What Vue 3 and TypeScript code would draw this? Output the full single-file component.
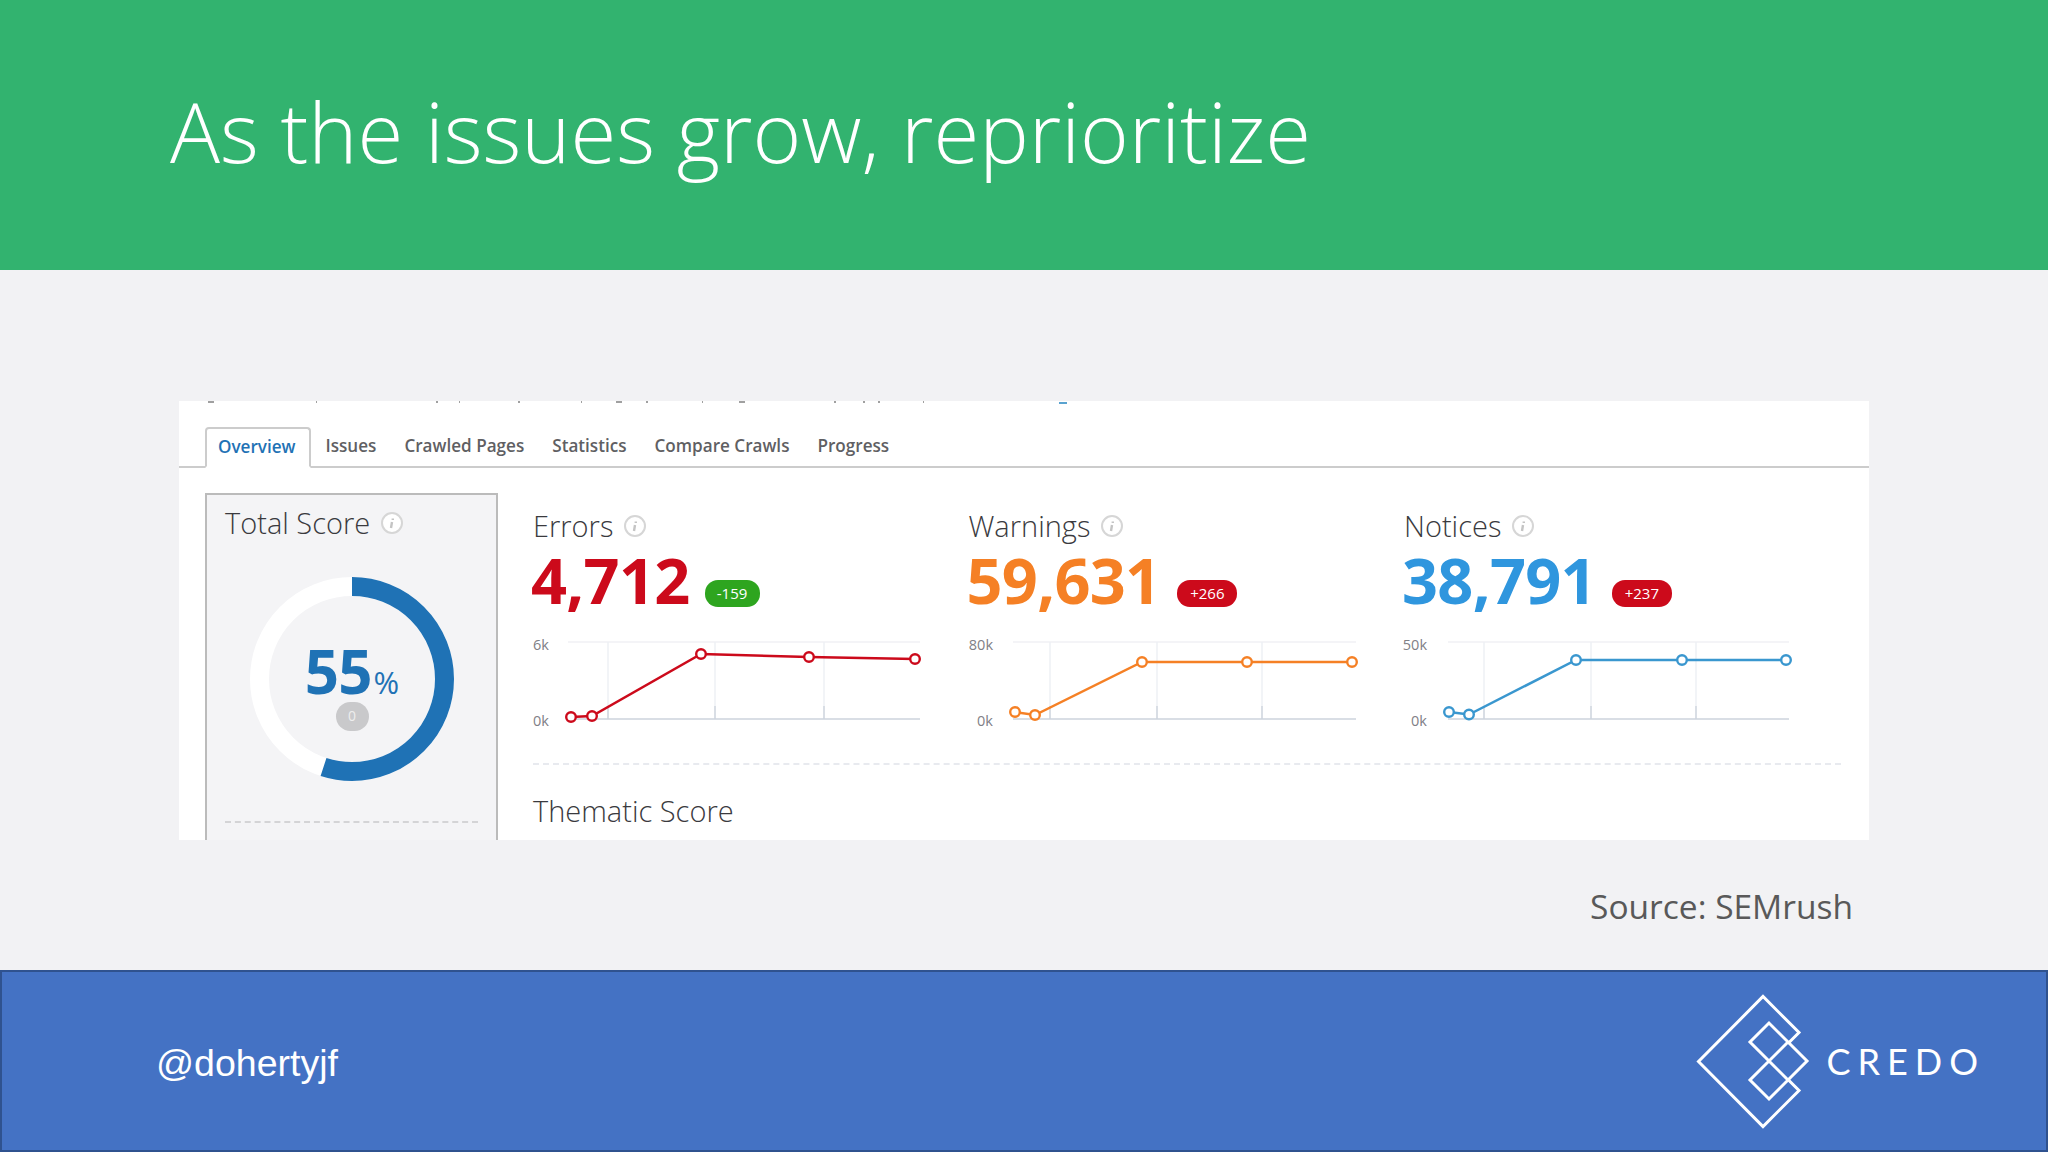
<script setup lang="ts">
interface Metric {
  title: string;
  value: string;
  color: string;
  lineColor: string;
  delta: string;
  deltaColor: string;
  deltaGap: number;
  deltaWidth: number;
  top: string;
  labelX: number;
  gridStart: number;
  gridEnd: number;
  ticks: number[];
  points: number[][];
}

const tabs = ['Issues', 'Crawled Pages', 'Statistics', 'Compare Crawls', 'Progress'];

// chart coordinates are relative to the column, y 0 sits above the top grid line
const metrics: Metric[] = [
  {
    title: 'Errors',
    value: '4,712',
    color: '#cc0a1b',
    lineColor: '#cc0a1b',
    delta: '-159',
    deltaColor: '#2ea51f',
    deltaGap: 15,
    deltaWidth: 55,
    top: '6k',
    labelX: 15,
    gridStart: 34,
    gridEnd: 386,
    ticks: [74, 181, 290],
    points: [[37, 87], [58, 86], [167, 24], [275, 27], [381, 29]],
  },
  {
    title: 'Warnings',
    value: '59,631',
    color: '#f58025',
    lineColor: '#f58025',
    delta: '+266',
    deltaColor: '#cc0a1b',
    deltaGap: 17,
    deltaWidth: 60,
    top: '80k',
    labelX: 23,
    gridStart: 43,
    gridEnd: 386,
    ticks: [80, 187, 292],
    points: [[45, 82], [65, 85], [172, 32], [277, 32], [382, 32]],
  },
  {
    title: 'Notices',
    value: '38,791',
    color: '#2f96de',
    lineColor: '#3a97cf',
    delta: '+237',
    deltaColor: '#cc0a1b',
    deltaGap: 16,
    deltaWidth: 60,
    top: '50k',
    labelX: 22,
    gridStart: 43,
    gridEnd: 384,
    ticks: [79, 186, 291],
    points: [[44, 82], [64, 84.5], [171, 30], [277, 30], [381, 30]],
  },
];

const linePoints = (points: number[][]) => points.map((p) => p.join(',')).join(' ');

// descenders of a line of text that the screenshot crop cut off
const clipped = [
  [29, 6], [137, 1], [257, 2], [280, 1], [339, 2], [402, 1], [437, 6], [467, 2],
  [523, 1], [560, 6], [655, 2], [684, 2], [699, 2], [744, 1],
];
</script>

<template>
  <div class="slide">
    <header class="banner">
      <h1>As the issues grow, reprioritize</h1>
    </header>

    <main class="content">
      <section class="shot">
        <svg class="cut-line" width="1690" height="4">
          <rect v-for="c in clipped" :key="c[0]" :x="c[0]" y="0" :width="c[1]" height="2" fill="#a0a0a0" />
          <rect x="880" y="1" width="8" height="2" fill="#5aa3d0" />
        </svg>

        <nav class="tabs">
          <span class="tab active">Overview</span>
          <span v-for="tab in tabs" :key="tab" class="tab">{{ tab }}</span>
        </nav>

        <div class="dash">
          <aside class="score-card">
            <h2 class="heading">
              Total Score
              <svg class="info" width="24" height="24" viewBox="0 0 24 24">
                <circle cx="12" cy="12" r="10" fill="#fff" stroke="#d6d6d6" stroke-width="2" />
                <path d="M12.8 7.500v1.500M12 11l-1 6" stroke="#c4c4c4" stroke-width="2.400" fill="none" />
              </svg>
            </h2>
            <div class="donut">
              <svg width="204" height="204" viewBox="0 0 204 204">
                <circle cx="102" cy="102" r="92.5" fill="none" stroke="#fff" stroke-width="19" />
                <circle
                  cx="102"
                  cy="102"
                  r="92.5"
                  fill="none"
                  stroke="#1f72b5"
                  stroke-width="19"
                  pathLength="100"
                  stroke-dasharray="55 45"
                  transform="rotate(-90 102 102)"
                />
              </svg>
              <div class="donut-text">
                <div class="percent">55<small>%</small></div>
                <div class="zero">0</div>
              </div>
            </div>
            <div class="score-rule"></div>
          </aside>

          <div class="overview">
            <div class="metrics">
              <div v-for="m in metrics" :key="m.title" class="metric">
                <h2 class="heading">
                  {{ m.title }}
                  <svg class="info" width="24" height="24" viewBox="0 0 24 24">
                    <circle cx="12" cy="12" r="10" fill="#fff" stroke="#d6d6d6" stroke-width="2" />
                    <path d="M12.8 7.500v1.500M12 11l-1 6" stroke="#c4c4c4" stroke-width="2.400" fill="none" />
                  </svg>
                </h2>
                <div class="figure">
                  <span class="value" :style="{ color: m.color }">{{ m.value }}</span>
                  <span
                    class="delta"
                    :style="{ background: m.deltaColor, marginLeft: m.deltaGap + 'px', width: m.deltaWidth + 'px' }"
                  >{{ m.delta }}</span>
                </div>
                <svg class="chart" width="400" height="105" viewBox="0 0 400 105">
                  <text class="axis" :x="m.labelX" y="20" text-anchor="end">{{ m.top }}</text>
                  <text class="axis" :x="m.labelX" y="96" text-anchor="end">0k</text>
                  <line :x1="m.gridStart" :x2="m.gridEnd" y1="12" y2="12" stroke="#f0f1f5" stroke-width="1.5" />
                  <g v-for="t in m.ticks" :key="t">
                    <line :x1="t" :x2="t" y1="12" y2="76" stroke="#eef0f4" stroke-width="1.5" />
                    <line :x1="t" :x2="t" y1="76" y2="89" stroke="#ccd3dc" stroke-width="1.5" />
                  </g>
                  <line :x1="m.gridStart" :x2="m.gridEnd" y1="89" y2="89" stroke="#ccd3dc" stroke-width="1.5" />
                  <polyline :points="linePoints(m.points)" fill="none" :stroke="m.lineColor" stroke-width="2.5" />
                  <circle
                    v-for="p in m.points"
                    :key="p[0]"
                    :cx="p[0]"
                    :cy="p[1]"
                    r="4.8"
                    fill="#fff"
                    :stroke="m.lineColor"
                    stroke-width="2.4"
                  />
                </svg>
              </div>
            </div>
            <h2 class="heading thematic">Thematic Score</h2>
          </div>
        </div>
      </section>

      <p class="source">Source: SEMrush</p>
    </main>

    <footer class="footer">
      <span class="handle">@dohertyjf</span>
      <div class="brand">
        <svg width="112" height="134" viewBox="0 0 112 134">
          <path
            d="M91 48.500 L102 37.500 L66 1.500 L1.500 66.500 L66 131.500 L102 95.500 L91 84.500"
            fill="none"
            stroke="#fff"
            stroke-width="3"
          />
          <path
            d="M72 66 L53 47 L72 28 L110 66 L72 104 L53 85 L91 47 M72 66 L91 85"
            fill="none"
            stroke="#fff"
            stroke-width="3"
          />
        </svg>
        <span class="credo">CREDO</span>
      </div>
    </footer>
  </div>
</template>

<style>
html,
body {
  margin: 0;
  padding: 0;
  background: #f2f2f4;
}
</style>

<style scoped>
.slide {
  width: 2048px;
  height: 1152px;
  display: flex;
  flex-direction: column;
  overflow: hidden;
  background: #f2f2f4;
  font-family: "Open Sans", "Noto Sans", sans-serif;
}

.banner {
  height: 270px;
  flex: none;
  box-sizing: border-box;
  padding: 78px 0 0 170px;
  background: #32b36f;
}

.banner h1 {
  margin: 0;
  color: #fff;
  font-size: 83.3px;
  line-height: 106px;
  font-weight: 300;
  white-space: nowrap;
}

.content {
  flex: 1;
  min-height: 0;
  padding: 131px 179px 0;
}

.shot {
  height: 439px;
  overflow: hidden;
  background: #fff;
}

.cut-line {
  display: block;
}

.tabs {
  display: flex;
  align-items: flex-end;
  height: 61px;
  padding-left: 26px;
  border-bottom: 2px solid #ccc;
  color: #5f5f63;
  font-size: 17.1px;
  font-weight: 600;
}

.tab {
  box-sizing: border-box;
  height: 39px;
  padding: 7px 14px 0;
  white-space: nowrap;
}

.tab.active {
  height: 41px;
  margin-bottom: -2px;
  margin-right: 1px;
  padding: 6px 13px 0 11px;
  border: 2px solid #ccc;
  border-bottom: 2px solid #fff;
  border-radius: 4px 4px 0 0;
  color: #1f72b5;
}

.dash {
  display: flex;
  padding: 25px 0 0 26px;
}

.score-card {
  box-sizing: border-box;
  width: 293px;
  height: 400px;
  flex: none;
  padding: 8px 18px 0;
  border: 2px solid #bbb;
  background: #f4f4f6;
}

.heading {
  display: flex;
  align-items: center;
  gap: 10px;
  margin: 0;
  color: #3a3a3e;
  font-size: 29px;
  line-height: 40px;
  font-weight: 300;
  white-space: nowrap;
}

.donut {
  position: relative;
  width: 204px;
  height: 204px;
  margin: 34px 0 0 25px;
}

.donut svg {
  display: block;
}

.donut-text {
  position: absolute;
  inset: 0;
  display: flex;
  flex-direction: column;
  align-items: center;
  padding-top: 74px;
  color: #1f72b5;
}

.percent {
  margin-left: 0;
  font-size: 60px;
  line-height: 40px;
  font-weight: 700;
  letter-spacing: -1px;
}

.percent small {
  margin-left: 2px;
  font-size: 31px;
  font-weight: 400;
  letter-spacing: 0;
}

.zero {
  width: 33px;
  height: 29px;
  border-radius: 15px;
  background: #c9c9cb;
  color: #eee;
  font-size: 14px;
  line-height: 27px;
  text-align: center;
}

.score-rule {
  margin-top: 40px;
  border-top: 2px dashed #d4d4d6;
}

.overview {
  width: 1308px;
  margin-left: 35px;
  padding-top: 13px;
}

.metrics {
  display: grid;
  grid-template-columns: repeat(3, 435.5px);
  height: 257px;
  border-bottom: 2px dashed #e8eaef;
}

.figure {
  display: flex;
  align-items: flex-end;
  height: 72px;
  margin-top: -2px;
}

.value {
  margin-left: -2px;
  font-size: 63px;
  line-height: 72px;
  font-weight: 700;
  letter-spacing: -0.7px;
}

.delta {
  box-sizing: border-box;
  height: 27px;
  margin-bottom: 9px;
  border-radius: 13px;
  color: #fff;
  font-size: 15px;
  line-height: 27px;
  text-align: center;
}

.chart {
  display: block;
  margin: 14px 0 0 1px;
  overflow: visible;
}

.axis {
  fill: #808086;
  font-size: 14.5px;
}

.thematic {
  margin-top: 26px;
}

.source {
  margin: 44px 16px 0 0;
  color: #595959;
  font-size: 33.5px;
  line-height: 44px;
  text-align: right;
}

.footer {
  height: 182px;
  flex: none;
  box-sizing: border-box;
  display: flex;
  align-items: center;
  justify-content: space-between;
  padding: 0 61px 0 154px;
  border: 2px solid #2f528f;
  background: #4472c4;
  color: #fff;
}

.handle {
  font-family: "Liberation Sans", Arial, sans-serif;
  font-size: 37.5px;
  margin-top: 4px;
}

.brand {
  display: flex;
  align-items: center;
  gap: 17px;
}

.brand svg {
  display: block;
  margin-top: 1px;
  overflow: visible;
}

.credo {
  font-family: Lato, "Open Sans", sans-serif;
  font-size: 36px;
  font-weight: 400;
  letter-spacing: 7px;
}
</style>
